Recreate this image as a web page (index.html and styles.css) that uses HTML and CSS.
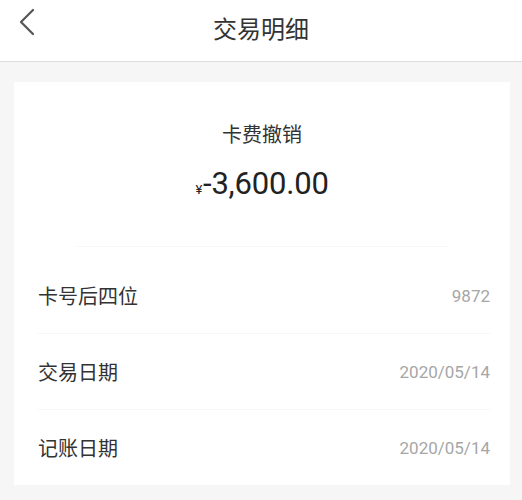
FILE: index.html
```html
<!DOCTYPE html>
<html lang="zh-CN">
<head>
  <meta charset="UTF-8" />
  <meta name="viewport" content="width=device-width, initial-scale=1.0"/>
  <title>交易明细</title>
  <link rel="stylesheet" href="styles.css">
</head>
<body>
  <div class="header">
    <span class="back">
      <svg width="18" height="28" viewBox="0 0 18 28">
        <polyline points="15,2 3,14 15,26" fill="none" stroke="#555" stroke-width="2.2" stroke-linecap="round" stroke-linejoin="round"/>
      </svg>
    </span>
    <h1 class="title">交易明细</h1>
  </div>

  <div class="page">
    <div class="card">
      <div class="summary">
        <div class="kind">卡费撤销</div>
        <div class="amount"><span class="yen">¥</span>-3,600.00</div>
      </div>

      <div class="rows">
        <div class="row">
          <span class="label">卡号后四位</span>
          <span class="value">9872</span>
        </div>
        <div class="row">
          <span class="label">交易日期</span>
          <span class="value">2020/05/14</span>
        </div>
        <div class="row">
          <span class="label">记账日期</span>
          <span class="value">2020/05/14</span>
        </div>
      </div>
    </div>
  </div>
</body>
</html>
```

FILE: styles.css
```css
body {
  margin: 0;
  background: #f6f6f6;
  font-family: Roboto, "Noto Sans CJK SC", sans-serif;
  color: #333;
}

.header {
  height: 61px;
  background: #fff;
  border-bottom: 1px solid #dcdcdc;
  display: flex;
  align-items: center;
  justify-content: center;
  position: relative;
}

.back {
  position: absolute;
  left: 18px;
  top: 8px;
  display: flex;
}

.title {
  margin: 0 0 6px 0;
  font-size: 24px;
  font-weight: 400;
  color: #333;
}

.page {
  padding: 20px 12px 20px 14px;
}

.card {
  background: #fff;
}

.summary {
  display: flex;
  flex-direction: column;
  align-items: center;
  padding: 40px 0 37px;
  border-bottom: 1px solid #f8f8f8;
  margin: 0 62px;
}

.kind {
  font-size: 20px;
  line-height: 26px;
  color: #333;
}

.amount {
  margin-top: 17px;
  font-size: 31px;
  line-height: 38px;
  color: #222;
  letter-spacing: -0.2px;
}

.yen {
  font-size: 13px;
  margin-right: 1px;
}

.rows {
  padding: 11px 20px 0 24px;
}

.row {
  display: flex;
  justify-content: space-between;
  align-items: center;
  height: 75px;
  border-bottom: 1px solid #f7f7f7;
}

.row:last-child {
  border-bottom: none;
}

.label {
  font-size: 20px;
  color: #333;
}

.value {
  font-size: 17px;
  color: #a6a6a6;
}
```
